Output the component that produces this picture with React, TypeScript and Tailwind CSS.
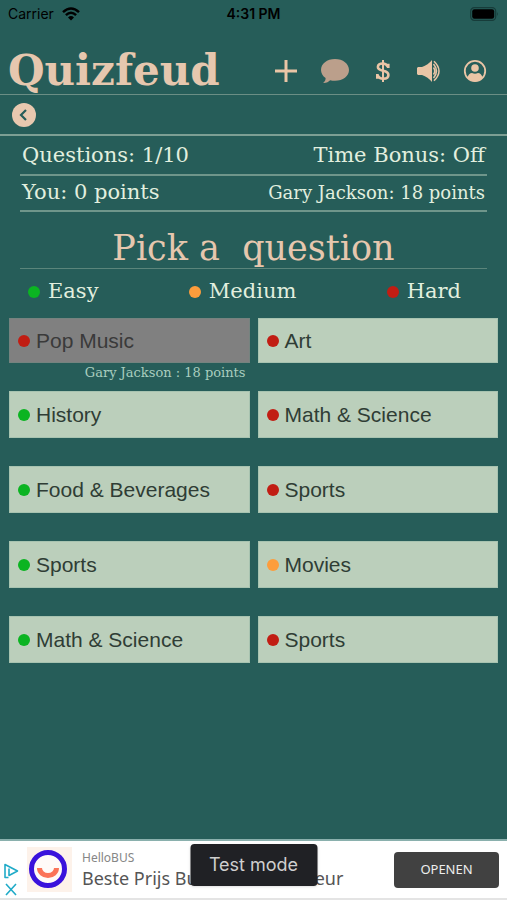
import React from "react";

type Level = "easy" | "medium" | "hard";

interface Question {
  title: string;
  level: Level;
  answeredBy?: string;
}

const dotColors: Record<Level, string> = {
  easy: "bg-[#0bb422]",
  medium: "bg-[#fd9d3c]",
  hard: "bg-[#c11d13]",
};

const questions: Question[] = [
  { title: "Pop Music", level: "hard", answeredBy: "Gary Jackson : 18 points" },
  { title: "Art", level: "hard" },
  { title: "History", level: "easy" },
  { title: "Math & Science", level: "hard" },
  { title: "Food & Beverages", level: "easy" },
  { title: "Sports", level: "hard" },
  { title: "Sports", level: "easy" },
  { title: "Movies", level: "medium" },
  { title: "Math & Science", level: "easy" },
  { title: "Sports", level: "hard" },
];

function Dot({ level }: { level: Level }) {
  return <span className={`size-3 shrink-0 rounded-full ${dotColors[level]}`} />;
}

function StatusBar() {
  return (
    <div className="grid h-7 grid-cols-3 items-center px-2 font-[Inter,sans-serif] text-sm text-black">
      <div className="flex items-center gap-2">
        <span>Carrier</span>
        <svg width="18" height="14" viewBox="0 0 18 14" aria-hidden="true">
          <g fill="none" stroke="#000" strokeWidth="2.5">
            <path d="M1 5.2Q9-2.2 17 5.2" />
            <path d="M3.9 8.2Q9 3.4 14.1 8.2" />
          </g>
          <path d="M6 10.4Q9 7.6 12 10.4L9 13.5Z" />
        </svg>
      </div>
      <span className="text-center font-semibold">4:31 PM</span>
      <svg className="ml-auto" width="29" height="14" viewBox="0 0 29 14" aria-hidden="true">
        <rect x="0.7" y="0.7" width="25" height="12.6" rx="3.6" fill="none" stroke="#173c3a" strokeWidth="1.2" />
        <rect x="2.2" y="2.2" width="22" height="9.6" rx="2.2" />
        <path d="M27 5q1.8 2 0 4z" fill="#173c3a" />
      </svg>
    </div>
  );
}

function Header() {
  return (
    <header className="flex h-[67px] items-center justify-between border-b border-[#6b8e85] pt-5 pr-5 pl-2">
      <h1 className="text-[42px] leading-none font-bold text-[#e6c7ae]">Quizfeud</h1>
      <nav className="flex items-center text-[#eac5a6]">
        <button aria-label="New game" className="mr-[22px]">
          <svg width="24" height="24" viewBox="0 0 24 24" stroke="currentColor" strokeWidth="3">
            <path d="M12 1v22M1 12h22" />
          </svg>
        </button>
        <button aria-label="Chat" className="mr-6 text-[#bb9f8b]">
          <svg width="30" height="26" viewBox="0 0 30 26" fill="currentColor">
            <path d="M15 1C7 1 1 5.7 1 12c0 3.3 1.8 6.1 4.6 8.1C5.8 22 4.8 23.6 3.2 25c3 .2 5.4-1.2 6.9-2.8 1.6.4 3.2.6 4.9.6 8 0 14-4.7 14-10.8S23 1 15 1z" />
          </svg>
        </button>
        <button aria-label="Credits" className="mr-6">
          <svg width="18" height="24" viewBox="0 0 18 24" fill="none" stroke="currentColor">
            <path strokeWidth="2" d="M9 1v22" />
            <path
              strokeWidth="2.6"
              d="M14.3 9V4.8M14 8C12.8 5.4 10.9 4.5 8.7 4.5c-2.8 0-4.8 1.3-4.8 3.5 0 2.6 2.4 3.1 5.2 3.8 3.3.7 5.3 1.5 5.3 4.1 0 2.4-2.2 3.8-5.1 3.8-2.8 0-4.8-1.4-5.8-3.8M3.3 15v4.7"
            />
          </svg>
        </button>
        <button aria-label="Sound" className="mr-[22px]">
          <svg width="25" height="24" viewBox="0 0 25 24">
            <path fill="currentColor" d="M1 9l1-1h4q6-2 10-7v22q-4-5-10-7H2l-1-1z" />
            <path fill="none" stroke="currentColor" strokeWidth="1.5" d="M17.5 8.5q2.5 3.5 0 7M17.5 5q6 7 0 14M18 2.2q10 9.8 0 19.6" />
          </svg>
        </button>
        <button aria-label="Profile">
          <svg width="24" height="24" viewBox="0 0 24 24">
            <circle cx="12" cy="12" r="10.2" fill="none" stroke="currentColor" strokeWidth="1.8" />
            <circle cx="12" cy="9" r="3.8" fill="currentColor" />
            <path fill="currentColor" d="M4.5 19c.5-3.500 2.500-5 4.500-5q3 1.500 6 0c2 0 4 1.500 4.500 5Q16.500 22.500 12 22.500T4.500 19z" />
          </svg>
        </button>
      </nav>
    </header>
  );
}

function QuestionTile({ question }: { question: Question }) {
  const answered = Boolean(question.answeredBy);
  return (
    <li className="group flex flex-col">
      <button
        disabled={answered}
        className={`flex h-[47px] w-full items-center gap-1.5 border pl-2 text-left font-['Liberation_Sans',sans-serif] text-[21px] leading-7 group-nth-[-n+2]:h-[45px] ${
          answered ? "border-[#75837f] bg-[#808080] text-[#3a3a3a]" : "border-[#a7c3b0] bg-[#bbcfbb] text-[#2f3d35]"
        }`}
      >
        <Dot level={question.level} />
        <span>{question.title}</span>
      </button>
      <p className="h-7 pr-1 text-right text-[13px] leading-5 text-[#a9cdbf]">{question.answeredBy}</p>
    </li>
  );
}

function AdBanner() {
  return (
    <aside className="relative mt-auto flex h-[61px] items-center border-y-2 border-t-[#8ab0ad] border-b-[#e4e4e4] bg-white pr-2 pl-1 font-['Noto_Sans',sans-serif]">
      <div className="flex flex-col gap-1 pt-5 text-[#20abc8]">
        <a href="#adchoices" aria-label="AdChoices">
          <svg width="15" height="16" viewBox="0 0 15 16" fill="none" stroke="currentColor" strokeWidth="1.6">
            <path d="M4.5 14.5H1v-13l12.500 6.500L5 12.500V5.500" strokeLinejoin="round" />
          </svg>
        </a>
        <button aria-label="Close ad">
          <svg width="14" height="13" viewBox="0 0 14 13" stroke="currentColor" strokeWidth="1.6">
            <path d="M2 1l10 11M12 1L2 12" />
          </svg>
        </button>
      </div>
      <svg className="ml-2 shrink-0" width="45" height="45" viewBox="0 0 45 45" aria-hidden="true">
        <rect width="45" height="45" fill="#fdf2ea" />
        <circle cx="21" cy="22" r="16.5" fill="#fffaf8" stroke="#3a12dc" strokeWidth="5" />
        <path d="M12.500 21a8.500 7.500 0 0 0 17 0" fill="none" stroke="#fb7358" strokeWidth="5" />
      </svg>
      <div className="ml-2.5 min-w-0 grow text-[#555]">
        <p className="text-xs leading-4 text-[#868686]">HelloBUS</p>
        <p className="truncate text-lg leading-6">Beste Prijs Bus Huur Chauffeur</p>
      </div>
      <button className="h-9 w-[105px] shrink-0 rounded bg-[#414141] text-[13px] text-[#eee]">OPENEN</button>
      <div className="absolute top-[3px] left-1/2 h-[42px] w-[127px] -translate-x-1/2 rounded bg-[#202125] text-center font-[Inter,sans-serif] text-lg leading-[42px] text-[#cfcfcf] shadow">
        Test mode
      </div>
    </aside>
  );
}

export default function App() {
  return (
    <div className="flex min-h-screen flex-col bg-[#265d59] font-['American_Typewriter','DejaVu_Serif',serif]">
      <StatusBar />
      <Header />
      <div className="flex h-[41px] items-center border-b-2 border-[#7d9f94] px-3">
        <button aria-label="Back" className="flex size-6 items-center justify-center rounded-full bg-[#e8c8af]">
          <svg width="12" height="14" viewBox="0 0 12 14" fill="none" stroke="#265d59" strokeWidth="2.2">
            <path d="M8 2L3 7l5 5" />
          </svg>
        </button>
      </div>
      <main>
        <section className="mx-5 text-[21px] text-[#e2efdf]">
          <div className="flex h-10 items-center justify-between border-b-2 border-[#6f968b] px-0.5 pt-0.5">
            <span>Questions: 1/10</span>
            <span>Time Bonus: Off</span>
          </div>
          <div className="flex h-9 items-center justify-between border-b-2 border-[#6f968b] px-0.5">
            <span>You: 0 points</span>
            <span className="text-lg">Gary Jackson: 18 points</span>
          </div>
          <h2 className="h-[57px] border-b border-[#5b857b] pt-4 text-center text-[35px] leading-10 whitespace-pre text-[#e6c7ae]">
            {"Pick a  question"}
          </h2>
          <div className="flex h-[49px] items-center justify-between pr-[26px] pb-1 pl-2">
            <span className="flex items-center gap-2"><Dot level="easy" />Easy</span>
            <span className="flex items-center gap-2"><Dot level="medium" />Medium</span>
            <span className="flex items-center gap-2"><Dot level="hard" />Hard</span>
          </div>
        </section>
        <ul className="mx-[9px] grid grid-cols-2 gap-x-2">
          {questions.map((question, index) => (
            <QuestionTile key={index} question={question} />
          ))}
        </ul>
      </main>
      <AdBanner />
    </div>
  );
}
